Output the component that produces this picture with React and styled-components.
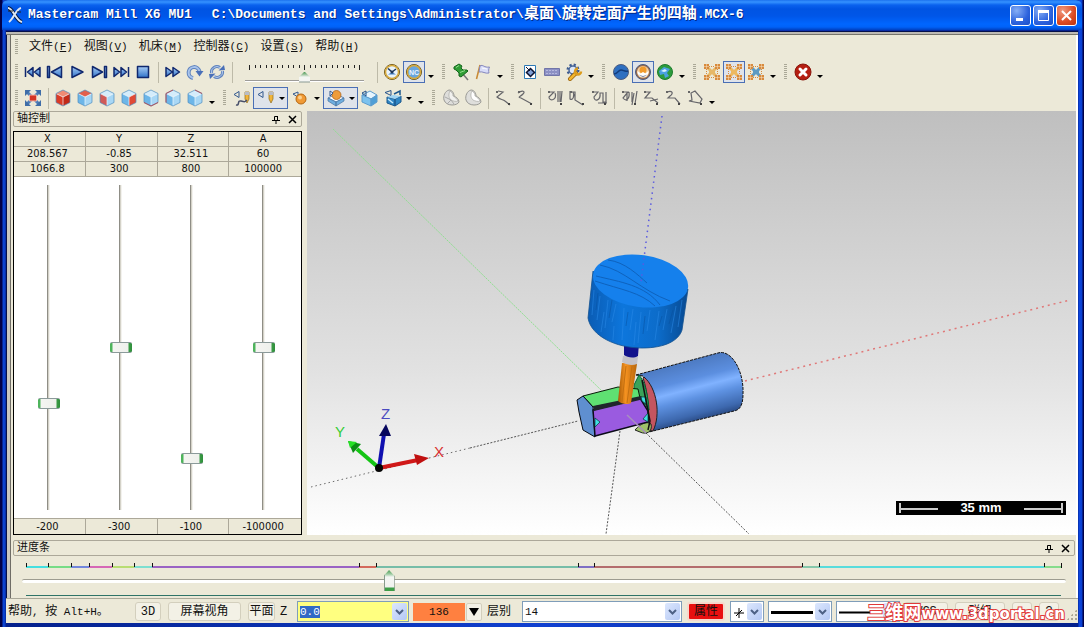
import { useEffect, useRef, useState } from 'react';
import styled, { createGlobalStyle, css } from 'styled-components';

const GlobalStyle = createGlobalStyle`
  * { box-sizing:border-box; }
  html, body { margin:0; }
  body { font-family:"Liberation Mono","Noto Sans CJK SC",monospace; font-size:12px; color:#111; }
  button, input, select { font:inherit; color:inherit; }
`;

/* ------------------- window frame ------------------- */
const Window = styled.div`
  display:flex;flex-direction:column;
  height:100vh;min-height:560px;position:relative;
  padding:0 6px 4px;
  background:linear-gradient(90deg,#000048 0,#000048 2px,#0b46d8 3px,#0b3fc8 5px,#04208c 6px,
    #1040d0 50%,#04208c calc(100% - 6px),#0b46e0 calc(100% - 5px),#0a3fd0 calc(100% - 2px),#000048 calc(100% - 1px));
`;
const TitleBar = styled.header`
  display:flex;align-items:center;height:30px;flex:none;
  margin:0 -4px;padding:0 5px 0 4px;
  border-radius:6px 6px 0 0;
  color:#fff;font-size:13px;font-weight:700;white-space:pre;
  text-shadow:1px 1px 0 #012a8a;
  background:linear-gradient(#1c72ee 0,#3592ff 2px,#0a62ee 5px,#0054e3 9px,#0056e8 16px,#0066ff 24px,#0062f8 27px,#0040c0 30px);
`;
const AppName = styled.h1`
  margin:0 20px 0 4px;font-size:13px;line-height:20px;
`;
const FilePath = styled.span`
  flex:1;line-height:20px;overflow:hidden;
`;
const Cjk = styled.span`
  font-size:15px;
`;
const WindowButtons = styled.div`
  display:flex;gap:2px;
`;
const WindowButton = styled.button`
  display:grid;place-items:center;width:21px;height:21px;padding:0;
  border:1px solid #fff;border-radius:3px;
  background:${p => p.$close
    ? 'radial-gradient(circle at 30% 25%,#f09a80,#dc4a22 60%,#b93412)'
    : 'radial-gradient(circle at 30% 25%,#86aef5,#2c62dd 60%,#1b4fc8)'};
`;
const Client = styled.main`
  flex:1;min-height:0;display:flex;flex-direction:column;
  margin-top:1px;padding:4px 2px 0 6px;
  background:
    linear-gradient(#05104a 0,#05104a 1px,#bdbab4 1px,#bdbab4 3px,#77756c 3px,#77756c 4px) 0 0/100% 4px no-repeat,
    linear-gradient(90deg,#05104a 0,#05104a 1px,#c9c7c0 1px,#c9c7c0 4px,#6f6d66 4px,#6f6d66 5px,#ece9d8 5px) 0 0/6px 100% no-repeat,
    linear-gradient(#fff,#fff) 100% 0/2px 100% no-repeat,
    #ece9d8;
`;

/* ------------------- menu and toolbars ------------------- */
const MenuBar = styled.nav`
  display:flex;align-items:center;height:24px;flex:none;
`;
const MenuItem = styled.button`
  margin:0 4px 0 7px;padding:0;border:0;background:none;line-height:18px;white-space:nowrap;
`;
const Mnemonic = styled.span`
  font-size:11px;
`;
const ToolRow = styled.div`
  display:flex;align-items:center;height:26px;flex:none;
`;
const Grip = styled.span`
  flex:none;height:16px;width:${p => p.$first ? 10 : 13}px;
  background:repeating-linear-gradient(#aaa897 0,#aaa897 1px,transparent 1px,transparent 2px)
    ${p => p.$first ? 3 : 5}px 0/3px 100% no-repeat;
`;
const Divider = styled.span`
  flex:none;width:8px;height:21px;
  background:linear-gradient(#bdbaa8,#bdbaa8) 4px 0/1px 100% no-repeat;
`;
const ToolButton = styled.button`
  display:flex;align-items:center;justify-content:center;flex:none;
  width:${p => p.$split ? 35 : 22}px;height:22px;padding:0;gap:4px;
  border:1px solid transparent;background:none;
  ${p => p.$active && css`border-color:#4a6fb5;background:#dfe3ea;`}
`;
const MoreButton = styled.button`
  display:flex;align-items:flex-end;justify-content:center;flex:none;
  width:12px;height:22px;padding:0 0 5px;border:0;background:none;
`;
const Triangle = styled.span`
  width:0;height:0;border:3px solid transparent;border-top-color:#000;border-bottom:0;
`;
const SpeedBox = styled.div`
  display:flex;flex-direction:column;width:137px;flex:none;height:22px;padding:4px 9px 0;
`;
const SpeedTicks = styled.div`
  display:flex;justify-content:space-between;align-items:flex-start;
  height:6px;flex:none;padding:0 4px;
`;
const Tick = styled.i`
  width:1px;height:${p => p.$tall ? 5 : 3}px;background:#222;
`;
const SpeedRange = styled.input`
  appearance:none;width:100%;height:11px;margin:0;background:none;
  &::-webkit-slider-runnable-track{ height:2px;margin-top:8px;background:#fff;border-top:1px solid #9d9c99; }
  &::-webkit-slider-thumb{
    appearance:none;width:11px;height:11px;margin-top:-9px;
    clip-path:polygon(50% 0,100% 50%,100% 100%,0 100%,0 50%);
    background:linear-gradient(#4a9c55 0,#8dbb8f 2px,#f4f5f2 5px,#f4f5f2 9px,#8a9a94 10px);
  }
`;

/* ------------------- dock panels ------------------- */
const Workspace = styled.div`
  flex:1;min-height:0;display:flex;
`;
const AxisPanel = styled.aside`
  display:flex;flex-direction:column;width:295px;flex:none;padding:0 5px 0 1px;
`;
const DockTitle = styled.div`
  display:flex;align-items:center;height:16px;flex:none;
  padding:0 1px 0 3px;border:1px solid #aca899;border-radius:2px;
`;
const DockName = styled.h2`
  flex:1;margin:0;font-size:11px;font-weight:400;line-height:14px;
`;
const DockButton = styled.button`
  display:grid;place-items:center;width:16px;height:14px;padding:0;border:0;background:none;
`;
const AxisBox = styled.div`
  flex:1;min-height:0;display:flex;flex-direction:column;margin-top:4px;
  border:1px solid #000;background:#fff;
  font-family:"DejaVu Sans Condensed","DejaVu Sans",sans-serif;font-size:11px;
`;
const AxisTable = styled.table`
  width:100%;table-layout:fixed;border-collapse:separate;border-spacing:0;flex:none;
  background:#ece9d8;
  th, td{
    height:15px;padding:0 4px 0 0;font-weight:400;line-height:14px;text-align:center;
    border-right:1px solid #aca899;border-bottom:1px solid #aca899;
  }
  th:last-child, td:last-child{ border-right:0; }
`;
const MinTable = styled(AxisTable)`
  border-top:1px solid #aca899;
  th, td{ border-bottom:0;line-height:15px; }
`;
const SliderRow = styled.div`
  flex:1;min-height:0;display:grid;grid-template-columns:repeat(4,1fr);
  padding:8px 0;
`;
const AxisSlot = styled.label`
  display:flex;justify-content:center;min-height:0;padding-right:3px;
`;
const AxisRange = styled.input`
  appearance:none;writing-mode:vertical-lr;direction:rtl;
  width:22px;height:100%;margin:0;background:none;
  &::-webkit-slider-runnable-track{
    width:3px;margin:0 auto;background:linear-gradient(90deg,#8f8e86 1px,#d4d2c8 1px,#d4d2c8 2px,#f3f2ee 2px);
  }
  &::-webkit-slider-thumb{
    appearance:none;width:22px;height:11px;margin-left:-9px;border-radius:2px;
    border:solid #8b9a9a;border-width:1px 0;
    background:linear-gradient(90deg,#4eb45c 0,#4eb45c 2px,#f5f5f2 3px,#eef0ec 18px,#3a9a45 19px,#2f8f3c 22px);
  }
`;

/* ------------------- 3D viewport ------------------- */
const Viewport = styled.section`
  flex:1;min-width:0;position:relative;overflow:hidden;
  background:linear-gradient(#bfbfbf,#e2e2e2 62%,#fff);
`;
const SceneSvg = styled.svg`
  display:block;width:100%;height:100%;
`;
const ScaleBar = styled.div`
  position:absolute;right:10px;bottom:20px;
  display:flex;align-items:center;justify-content:space-between;
  width:170px;height:14px;padding:0 3px;background:#000;color:#fff;
  font:700 13px/14px "Liberation Sans",sans-serif;
`;
const Whisker = styled.i`
  width:39px;height:10px;
  border-left:${p => p.$end ? 0 : 2}px solid #ccc;
  border-right:${p => p.$end ? 2 : 0}px solid #ccc;
  background:linear-gradient(#ccc,#ccc) 0 5px/100% 2px no-repeat;
`;

/* ------------------- progress panel ------------------- */
const ProgressPanel = styled.section`
  flex:none;padding:5px 1px 2px;
`;
const Segments = styled.div`
  display:flex;height:5px;margin:7px 13px 0;border-right:1px solid #111;
`;
const Segment = styled.i`
  flex:${p => p.$weight} 1 0;
  background:
    linear-gradient(#111,#111) 0 0/1px 4px no-repeat,
    linear-gradient(${p => p.$color},${p => p.$color}) 0 3px/100% 2px no-repeat;
`;
const ProgressRange = styled.input`
  appearance:none;display:block;width:calc(100% - 18px);height:22px;margin:2px 9px 0;background:none;
  &::-webkit-slider-runnable-track{ height:4px;background:#fff;border-top:1px solid #9d9c90;border-radius:2px; }
  &::-webkit-slider-thumb{
    appearance:none;width:11px;height:21px;margin-top:-10px;
    clip-path:polygon(50% 0,100% 28%,100% 100%,0 100%,0 28%);
    background:
      linear-gradient(90deg,#879a8c 0,#879a8c 1px,transparent 1px,transparent 10px,#6d8072 10px),
      linear-gradient(#4a9c55 0,#9ccaa0 4px,#f5f6f3 7px,#f0f1ee 17px,#3d9e47 18px);
  }
`;
const TotalLine = styled.div`
  height:1px;margin:3px 14px 0 13px;background:#2f7468;
`;

/* ------------------- status bar ------------------- */
const StatusBar = styled.footer`
  display:flex;align-items:center;height:25px;flex:none;
  padding:1px 1px 0 2px;border-top:1px solid #aaa899;background:#ece9d8;
  white-space:nowrap;overflow:hidden;
`;
const HelpText = styled.span`
  width:127px;flex:none;line-height:18px;
`;
const Small = styled.span`
  font-size:11px;
`;
const StatusButton = styled.button`
  width:${p => p.$width}px;height:19px;flex:none;margin-right:${p => p.$gap || 7}px;
  padding:0;border:1px solid #d3cfbd;border-radius:3px;background:#f3f1e6;line-height:16px;
`;
const StatusLabel = styled.label`
  width:${p => p.$width}px;flex:none;line-height:18px;
`;
const Combo = styled.div`
  position:relative;display:flex;height:21px;margin-right:4px;
  width:${p => p.$width}px;flex:none;
  border:1px solid #7f9db9;background:${p => p.$color || '#fff'};
`;
const ComboInput = styled.input`
  flex:1;min-width:0;padding:0 2px;border:0;outline:0;background:none;
  font-size:11px;
  &::selection{ background:#316ac5;color:#fff; }
`;
const ComboSelect = styled.select`
  appearance:none;width:100%;padding:0 2px;border:0;background:none;font-size:11px;
`;
const ComboArrow = styled.span`
  display:grid;place-items:center;width:15px;height:17px;margin:1px;flex:none;
  border-radius:2px;background:linear-gradient(135deg,#dce7fd,#b4c8f4);
  ${p => p.$over && css`position:absolute;right:0;top:0;pointer-events:none;`}
`;
const Sample = styled.svg`
  position:absolute;left:2px;top:2px;pointer-events:none;
`;
const ColorButton = styled.button`
  width:52px;height:18px;flex:none;padding:0;border:0;background:#ff8040;font-size:11px;line-height:16px;
`;
const ColorDrop = styled.button`
  display:grid;place-items:center;width:16px;height:18px;flex:none;margin:0 5px 0 1px;padding:0;
  border:1px solid #d3cfbd;border-radius:2px;background:#f3f1e6;
`;
const BigTriangle = styled.span`
  border:5px solid transparent;border-top:8px solid #000;border-bottom:0;
`;
const AttrButton = styled.button`
  width:38px;height:19px;flex:none;margin:0 5px 0 1px;padding:0;
  border:2px solid #f6d8cc;border-radius:3px;background:#e81010;line-height:14px;
`;
const SizeGrip = styled.span`
  align-self:flex-end;width:12px;height:12px;margin:0 0 2px auto;
  background:radial-gradient(circle,#a9a693 1px,transparent 1px) 0 0/4px 4px;
  clip-path:polygon(100% 0,100% 100%,0 100%);
`;
const Watermark = styled.div`
  position:absolute;right:19px;bottom:2px;pointer-events:none;
  color:#fff;-webkit-text-stroke:2px #e03a3a;paint-order:stroke fill;
  font:700 15px/22px "DejaVu Sans","Noto Sans CJK SC",sans-serif;white-space:nowrap;
`;
const WatermarkName = styled.span`
  font-size:18px;
`;

/* ------------------- icons ------------------- */
const Svg = ({ children, size = 18 }) => (
  <svg width={size} height={size} viewBox="0 0 18 18" fill="none" aria-hidden="true">{children}</svg>
);

const media = {
  first: 'M1.5 4v10M9 4.500L3.500 9l5.500 4.500zM16 4.500L10.500 9l5.500 4.500z',
  prev: 'M1.500 3.500h2v11h-2zM15.500 3.500v11L5.500 9z',
  play: 'M4 3.500v11L15 9z',
  next: 'M2.500 3.500v11L12.500 9zM14.500 3.500h2v11h-2z',
  last: 'M16.500 4v10M2 4.500L7.500 9 2 13.500zM9 4.500L14.500 9 9 13.500z',
  stop: 'M3.500 3.500h11v11h-11z',
  fast: 'M2 4.500L8.500 9 2 13.500zM9 4.500L15.500 9 9 13.500z',
};
const MediaIcon = ({ name }) => (
  <Svg><path d={media[name]} fill="url(#blueFill)" stroke="#10286e" strokeWidth="1.500" strokeLinejoin="round" /></Svg>
);
const TurnIcon = () => (
  <Svg>
    <path d="M7 15A5.500 5.500 0 1 1 13.500 8.500" stroke="#5f83bd" strokeWidth="4" />
    <path d="M7 15A5.500 5.500 0 1 1 13.500 8.500" stroke="#a9c4ec" strokeWidth="2" />
    <path d="M9.500 8h8L13.500 13.500z" fill="#4a70b8" />
  </Svg>
);
const CycleIcon = () => (
  <Svg>
    <path d="M3.500 10A5.500 5.500 0 0 1 12 4.500M14.500 8A5.500 5.500 0 0 1 6 13.500" stroke="#5f83bd" strokeWidth="3" />
    <path d="M3.500 10A5.500 5.500 0 0 1 12 4.500M14.500 8A5.500 5.500 0 0 1 6 13.500" stroke="#b4cbee" />
    <path d="M10.500 7.500l6.500-.5-1-5zM7.500 10.500L1 11l1 5z" fill="#4a70b8" />
  </Svg>
);
const ClockIcon = ({ nc }) => (
  <Svg>
    <circle cx="9" cy="9" r="7.500" fill={nc ? '#68a5dd' : '#e9f3fb'} stroke="#6a5214" />
    <circle cx="9" cy="9" r="6.500" stroke="#d6a93c" strokeWidth="1.500" />
    {nc
      ? <text x="9" y="11.500" textAnchor="middle" fontSize="7" fontWeight="700" fill="#e8f4ff" fontFamily="Liberation Sans">NC</text>
      : <><path d="M9 9L5 5.500M9 9l4-3" stroke="#1d3557" strokeWidth="1.500" /><path d="M5 11.500h8L9 9z" fill="#4b86c6" /><circle cx="9" cy="9" r="1.500" fill="#1d3557" /></>}
  </Svg>
);
const PinIcon = () => (
  <Svg>
    <path d="M10 10l6 7" stroke="#777" strokeWidth="1.500" />
    <path d="M2 4l5-3 3 2-1 2 2 2h4l1 1-7 6-2-1v-3L4 7 2 6z" fill="#2f9d35" stroke="#14651c" />
    <path d="M4 4.500l3-2M8 9.500l5-2" stroke="#92dd8b" />
  </Svg>
);
const FlagIcon = () => (
  <Svg>
    <path d="M6 2L2.500 16" stroke="#c98a35" strokeWidth="1.500" />
    <path d="M6 3c3-2 4 2 9.500 1-1 2-1 4-.5 6-4 1-6-2-10-1z" fill="#d8dcf8" stroke="#8487bd" />
    <path d="M8 5c2 0 3 1 5 1" stroke="#fff" />
  </Svg>
);
const MatchIcon = () => (
  <Svg>
    <path d="M3.500 2.500h11v13h-11z" fill="#fff" stroke="#2d79b5" />
    <path d="M9.500 5.500l4 4-4 4-4-4z" fill="#7fa0d6" stroke="#0c1230" strokeWidth="1.500" />
    <path d="M5 4l4 4" stroke="#0c1230" />
  </Svg>
);
const RulerIcon = () => (
  <Svg><path d="M1.500 5.500h15v7h-15z" fill="#8c90c4" stroke="#7175a8" /><path d="M3 7.500h12M3 10.500h12" stroke="#b5b8de" strokeDasharray="2 1" /></Svg>
);
const GearIcon = () => (
  <Svg>
    <circle cx="8" cy="7" r="5" stroke="#3d5b8f" strokeWidth="3" strokeDasharray="2 1.930" />
    <circle cx="8" cy="7" r="4" fill="#dfe8f5" stroke="#4a689b" strokeWidth="1.500" />
    <path d="M5 16l6-6" stroke="#9a6510" strokeWidth="4" strokeLinecap="round" />
    <path d="M5 16l6-6" stroke="#f2b62e" strokeWidth="2.500" strokeLinecap="round" />
    <path d="M16 8.500a3 3 0 1 1-3-3" stroke="#dc9c1c" strokeWidth="2.500" />
  </Svg>
);
const GlobeIcon = ({ kind }) => {
  const tint = { blue: '#2e6fc0', warm: '#9d6b4a', green: '#2c9b3c' }[kind];
  return (
    <Svg>
      <circle cx="9" cy="9" r="7.500" fill={tint} stroke={kind === 'green' ? '#1d7c2d' : '#4b5c80'} />
      {kind === 'blue' && <path d="M2 11c4 0 4-4 7-4s3 2 7 1" stroke="#123c7c" strokeWidth="1.500" />}
      {kind === 'warm' && (
        <>
          <circle cx="9" cy="9" r="6" fill="#f3d3a8" />
          <circle cx="9" cy="7" r="3.500" fill="#f09a2c" />
          <path d="M3.500 8l3 2.500L9 9l2.500 1.500L14.500 8c0 4-2.500 6-5.500 6s-5.500-2-5.500-6z" fill="#fff" />
          <path d="M4.500 11.500L9 13l4.500-1.500-4.500 3z" fill="#8b8fa5" />
        </>
      )}
      {kind === 'green' && <><path d="M3 8l5-4 6 2-3 4 2 3-4 2-1-4-4 1z" fill="#4aa0e0" /><path d="M5 8l4-2 2 2-3 1z" fill="#d9f3ff" /></>}
    </Svg>
  );
};
const FixtureIcon = ({ mid, accent = '#d78a3c' }) => (
  <Svg>
    <path d="M4 4l10 10M14 4L4 14" stroke={mid} strokeWidth="3" />
    {[[1, 1], [12, 1], [1, 12], [12, 12]].map(([x, y]) => (
      <g key={`${x}-${y}`}>
        <path d={`M${x} ${y}h5v5h-5z`} fill={accent} />
        <path d={`M${x} ${y + 2.500}h5M${x + 2.500} ${y}v5`} stroke="#f6e4c8" strokeWidth=".5" />
      </g>
    ))}
    <path d="M6 7h6v4H6z" fill={mid} />
    <path d="M3.500 6v6M14.500 6v6M6 3.500h6M6 14.500h6" stroke={accent} strokeDasharray="1 1" />
  </Svg>
);
const FitIcon = () => (
  <Svg>
    <path d="M3 3l12 12M15 3L3 15" stroke="#4d7db8" strokeWidth="3" />
    <path d="M1 1h6L1 7zM17 1h-6l6 6zM1 17h6l-6-6zM17 17h-6l6-6z" fill="#3f6da8" />
    <path d="M5.500 6h7v6h-7z" fill="#d53525" stroke="#f3b5a5" />
  </Svg>
);
const StopIcon = () => (
  <Svg>
    <circle cx="9" cy="9" r="8" fill="#b51f12" stroke="#8a150b" />
    <path d="M6 6l6 6M12 6l-6 6" stroke="#fff" strokeWidth="3" strokeLinecap="round" />
  </Svg>
);
const CubeIcon = ({ top = '#d4ecfb', left = '#6db6e8', right = '#a8d7f5', line }) => (
  <Svg>
    <path d="M9 1l7 3.500L9 8 2 4.500z" fill={top} />
    <path d="M2 4.500L9 8v9l-7-3.500z" fill={left} />
    <path d="M16 4.500L9 8v9l7-3.500z" fill={right} />
    <path d="M2 4.500L9 8l7-3.500M9 8v9" stroke="#f2f9fe" strokeWidth=".7" />
    <path d="M9 1l7 3.500v9L9 17l-7-3.500v-9z" stroke="#4d8cbf" strokeWidth=".7" />
    {line && <path d={line} stroke="#b0505a" />}
  </Svg>
);
const ToolTipIcon = ({ trace }) => (
  <Svg>
    <path d="M1 5.500l5-3v6z" stroke="#33598f" />
    <path d="M12 3h4v7l-2 4-2-4z" fill="#f2b53a" stroke="#8d6a1d" strokeWidth=".7" />
    <path d="M12 3h4v3h-4z" fill="#b8bcc7" />
    {trace && <path d="M3 16c4 1 1-5 5-4s4 1 6-1" stroke="#48506a" strokeWidth="1.500" />}
  </Svg>
);
const StockIcon = () => (
  <Svg>
    <path d="M1 5l5-2v5z" stroke="#33598f" />
    <circle cx="9" cy="10" r="5" fill="#f09a35" stroke="#b5660f" /><circle cx="8" cy="8.500" r="2" fill="#fbd08d" />
  </Svg>
);
const SolidIcon = () => (
  <Svg>
    <path d="M1 9l8-4 8 4-8 4z" fill="#f7fbff" stroke="#5b84b5" />
    <path d="M1 9v3l8 5v-4zM17 9v3l-8 5v-4z" fill="#6faee0" stroke="#47749f" strokeWidth=".7" />
    <circle cx="9.500" cy="6" r="4.500" fill="#ee9c3b" stroke="#a65b12" strokeWidth=".7" />
    <path d="M6 4l-3-2v5z" fill="#e9eef9" stroke="#33598f" />
  </Svg>
);
const BoxIcon = () => (
  <Svg>
    <path d="M2 6l8-4 7 4-6 4z" fill="#e6f5fe" stroke="#5d9ccd" />
    <path d="M2 6l9 4v7l-9-4z" fill="#7cc2ee" stroke="#5d9ccd" />
    <path d="M17 6l-6 4v7l6-4z" fill="#4f9fd6" stroke="#5d9ccd" />
    <path d="M2 4l4-2v5z" stroke="#24528b" />
  </Svg>
);
const MachineIcon = () => (
  <Svg>
    <path d="M1 3.500l6-2v5z" stroke="#24528b" />
    <path d="M3 8l8 2v7l-8-3zM17 7l-6 3v7l6-4z" fill="#2f86c4" stroke="#1d588d" />
    <path d="M3 8l6-2 8 1-6 3z" fill="#9ed4f3" /><path d="M10 5l6-3v4" stroke="#1d588d" strokeWidth="1.500" />
    <path d="M4 10l5 4" stroke="#c9eafc" strokeWidth="1.500" />
  </Svg>
);
/* shell shape: a tilted disc with a lighter lobe at the lower right */
const PartIcon = ({ plain }) => (
  <Svg>
    <path d="M7 1C3 2 1 7 2 11c1 3 4 5 8 5 3 0 6-1 7-3 0-3-3-5-5-6 0-3-2-6-5-6z" fill="#dededb" stroke="#9a9a95" />
    <path d="M8 2c-2 4-1 7 1 9 2 1 5 2 7 1-1-2-3-4-5-5 0-2-1-4-3-5z" fill={plain ? '#fff' : '#f1f1ef'} stroke="#a9a9a4" strokeWidth=".7" />
    {!plain && <path d="M3 8l6 3-4 4M9 11l3 4" stroke="#aaa" />}
  </Svg>
);
const curves = [
  'M4 2l5 1-6 5c3 3 6 2 8 4l5 4',
  'M2 4c4-3 8-2 5 1s-6 3-2 4l11 6',
  'M2 3h6L3 8c0 5 9 3 6-4M12 2v11M14 2v11M16 2l-1 11',
  'M2 2v8c3 2 5-4 3-7M4 3h3v8l8 5',
  'M2 3h6L4 8c0 5 7 4 6-4h3v9h3V3M8 14h9',
  'M2 3h6L3 9c3 4 7 1 6-6M4 3h3v9M12 3v10M14 4l-2 12M17 2l-2 13',
  'M2 3h6L3 9h7l6 5M8 12l8-2',
  'M3 3c5-2 7 1 3 4l-2 2h7l5 6',
  'M3 12l3-1-1-7 4-2 7 8-2 4z',
];
const CurveIcon = ({ index }) => (
  <Svg>
    <path d={curves[index]} stroke="#66666a" strokeWidth="1.200" />
    <path d="M14 14h2v2h-2z" fill="#444" /><path d="M2 2h2v2H2z" fill="#666" />
  </Svg>
);
const ChevronIcon = () => (
  <svg width="9" height="6" viewBox="0 0 9 6" fill="none" aria-hidden="true">
    <path d="M1 1l3.500 3.500L8 1" stroke="#4d6185" strokeWidth="2" />
  </svg>
);
const AppIcon = () => (
  <Svg size={18}>
    <path d="M2 2c5 0 8 13 14 14" stroke="#061a44" strokeWidth="4" />
    <path d="M2 2c5 0 8 13 14 14M15 2C10 3 8 12 3 16" stroke="#dfe7f2" strokeWidth="2" />
    <path d="M2 5h5M11 6h4" stroke="#222" />
  </Svg>
);

/* ------------------- data ------------------- */
const menus = [['文件', 'F'], ['视图', 'V'], ['机床', 'M'], ['控制器', 'C'], ['设置', 'S'], ['帮助', 'H']];

const axes = [
  { name: 'X', value: 208.567, max: 1066.8, min: -200 },
  { name: 'Y', value: -0.85, max: 300, min: -300 },
  { name: 'Z', value: 32.511, max: 800, min: -100 },
  { name: 'A', value: 60, max: 100000, min: -100000 },
];

const segments = [
  [22, '#45dfe0'], [23, '#77dc86'], [18, '#7387dd'], [23, '#d668b6'], [22, '#b8dd72'],
  [18, '#7ddfd0'], [207, '#9a63c4'], [17, '#d46a5c'], [203, '#76bda8'], [16, '#7f6fc4'],
  [208, '#b46d6d'], [17, '#86c7ab'], [225, '#58dcdc'], [17, '#86dc8c'],
];

const red = '#dc3b26';
const cubes = [
  { top: '#f08a74', left: red, right: '#c22a18' },
  { top: '#e2604c' },
  { left: '#cf5a58' },
  { right: '#e04a36' },
  { line: 'M2 13.500L9 17l7-3.500' },
  { line: 'M2 13.500v-9L9 1' },
  { line: 'M9 1l7 3.500' },
];
const cubeNames = ['等角视图', '俯视图', '前视图', '右视图', '仰视图', '后视图', '左视图'];

/* ------------------- parts ------------------- */
const Tool = ({ label, active, split, children }) => (
  <ToolButton type="button" aria-label={label} $active={active} $split={split}>
    {children}
    {split && <Triangle />}
  </ToolButton>
);
const More = () => <MoreButton type="button" aria-label="更多"><Triangle /></MoreButton>;

function PlaybackToolbar() {
  return (
    <ToolRow role="toolbar" aria-label="播放">
      <Grip $first />
      {['first', 'prev', 'play', 'next', 'last', 'stop'].map(n => (
        <Tool key={n} label={n}><MediaIcon name={n} /></Tool>
      ))}
      <Divider />
      <Tool label="fast"><MediaIcon name="fast" /></Tool>
      <Tool label="turn"><TurnIcon /></Tool>
      <Tool label="cycle"><CycleIcon /></Tool>
      <Divider />
      <SpeedBox>
        <SpeedTicks>
          {Array.from({ length: 21 }, (_, i) => <Tick key={i} $tall={i % 10 === 0} />)}
        </SpeedTicks>
        <SpeedRange type="range" aria-label="速度" defaultValue={50} />
      </SpeedBox>
      <Divider />
      <Tool label="时间"><ClockIcon /></Tool>
      <Tool label="NC" active><ClockIcon nc /></Tool>
      <More />
      <Grip />
      <Tool label="固定"><PinIcon /></Tool>
      <Tool label="标记"><FlagIcon /></Tool>
      <More />
      <Grip />
      <Tool label="比较"><MatchIcon /></Tool>
      <Tool label="测量"><RulerIcon /></Tool>
      <Tool label="选项"><GearIcon /></Tool>
      <More />
      <Grip />
      <Tool label="刀路"><GlobeIcon kind="blue" /></Tool>
      <Tool label="工件" active><GlobeIcon kind="warm" /></Tool>
      <Tool label="机床"><GlobeIcon kind="green" /></Tool>
      <More />
      <Grip />
      <Tool label="夹具"><FixtureIcon mid="#e6b868" /></Tool>
      <Tool label="夹具工件" active><FixtureIcon mid="#edb95f" /></Tool>
      <Tool label="夹具机床"><FixtureIcon mid="#5c9bc4" /></Tool>
      <More />
      <Grip />
      <Tool label="退出"><StopIcon /></Tool>
      <More />
    </ToolRow>
  );
}

function ViewToolbar() {
  return (
    <ToolRow role="toolbar" aria-label="视图">
      <Grip $first />
      <Tool label="适度化"><FitIcon /></Tool>
      <Divider />
      {cubes.map((c, i) => <Tool key={cubeNames[i]} label={cubeNames[i]}><CubeIcon {...c} /></Tool>)}
      <More />
      <Grip />
      <Tool label="刀具轨迹"><ToolTipIcon trace /></Tool>
      <Tool label="刀具" active split><ToolTipIcon /></Tool>
      <Tool label="毛坯" split><StockIcon /></Tool>
      <Tool label="实体" active split><SolidIcon /></Tool>
      <Tool label="外框"><BoxIcon /></Tool>
      <Tool label="机台" split><MachineIcon /></Tool>
      <More />
      <Grip />
      <Tool label="零件网格"><PartIcon /></Tool>
      <Tool label="零件"><PartIcon plain /></Tool>
      {curves.map((_, i) => [
        (i === 0 || i === 2 || i === 5) && <Divider key={`d${i}`} />,
        <Tool key={i} label={`曲线 ${i + 1}`}><CurveIcon index={i} /></Tool>,
      ])}
      <More />
    </ToolRow>
  );
}

function DockHeader({ title }) {
  return (
    <DockTitle>
      <DockName>{title}</DockName>
      <DockButton type="button" aria-label="固定">
        <svg width="8" height="9" viewBox="0 0 8 9" fill="none">
          <path d="M2.500 5V1.500h3V5M0 5.500h8M4 6v3" stroke="#000" /><path d="M5 1h1v4H5z" fill="#000" />
        </svg>
      </DockButton>
      <DockButton type="button" aria-label="关闭">
        <svg width="9" height="9" viewBox="0 0 9 9"><path d="M1 1l7 7M8 1L1 8" stroke="#000" strokeWidth="1.500" /></svg>
      </DockButton>
    </DockTitle>
  );
}

function AxisControl() {
  const [values, setValues] = useState(axes.map(a => a.value));
  const move = (i, v) => setValues(values.map((old, k) => (k === i ? Number(v) : old)));

  return (
    <AxisPanel>
      <DockHeader title="轴控制" />
      <AxisBox>
        <AxisTable>
          <thead><tr>{axes.map(a => <th key={a.name} scope="col">{a.name}</th>)}</tr></thead>
          <tbody>
            <tr>{axes.map((a, i) => <td key={a.name}>{values[i]}</td>)}</tr>
            <tr>{axes.map(a => <td key={a.name}>{a.max}</td>)}</tr>
          </tbody>
        </AxisTable>
        <SliderRow>
          {axes.map((a, i) => (
            <AxisSlot key={a.name}>
              <AxisRange type="range" step="any" aria-label={a.name} min={a.min} max={a.max}
                         value={values[i]} onChange={e => move(i, e.target.value)} />
            </AxisSlot>
          ))}
        </SliderRow>
        <MinTable>
          <tbody><tr>{axes.map(a => <td key={a.name}>{a.min}</td>)}</tr></tbody>
        </MinTable>
      </AxisBox>
    </AxisPanel>
  );
}

function Scene() {
  return (
    <SceneSvg viewBox="307 111 769 424" preserveAspectRatio="xMidYMid slice" fill="none" role="img" aria-label="机床仿真">
      <defs>
        <linearGradient id="blueFill" x1="0" y1="0" x2="0" y2="1">
          <stop offset="0" stopColor="#a9cdf5" /><stop offset="1" stopColor="#2f72c8" />
        </linearGradient>
        <linearGradient id="bar" gradientUnits="userSpaceOnUse" x1="680" y1="362" x2="696" y2="424">
          <stop offset="0" stopColor="#4c79c0" /><stop offset=".3" stopColor="#5c8fe0" />
          <stop offset=".45" stopColor="#80b2ff" /><stop offset=".6" stopColor="#5e92e2" />
          <stop offset=".85" stopColor="#3d68ae" /><stop offset="1" stopColor="#223f74" />
        </linearGradient>
        <linearGradient id="holder" x1="0" y1="0" x2="1" y2="0">
          <stop offset="0" stopColor="#0a5cb4" /><stop offset=".35" stopColor="#0d76dc" />
          <stop offset=".7" stopColor="#0c6cca" /><stop offset="1" stopColor="#084a92" />
        </linearGradient>
        <linearGradient id="cutter" x1="0" y1="0" x2="1" y2="0">
          <stop offset="0" stopColor="#a85a06" /><stop offset=".4" stopColor="#f59220" /><stop offset="1" stopColor="#b8660c" />
        </linearGradient>
      </defs>

      {/* long axis lines */}
      <path d="M333 129L602 391" stroke="#8fe08f" strokeDasharray="2 1" />
      <path d="M745 381L1070 300" stroke="#e07878" strokeWidth="1.500" strokeDasharray="2 4" />
      <path d="M311 487L470 448" stroke="#6b6b6b" strokeDasharray="1.500 3" />
      <path d="M470 448L578 421M620 431L606 534M646 433L749 534" stroke="#555" strokeDasharray="2 1.500" />

      {/* round stock */}
      <path d="M636 375L718 353C731 349 744 370 743 394C743 405 740 410 734 411L649 432C661 420 655 388 643 376z"
            fill="url(#bar)" stroke="#111" strokeDasharray="3 1" />
      <path d="M644 377C657 388 661 415 653 431L647 430C650 413 648 392 643 378z" fill="#c45560" stroke="#222" />
      <path d="M634 385L639 375C645 382 648 395 649 410L641 398L634 390z" fill="#3aa35a" stroke="#063" />
      <path d="M635 430C641 423 647 421 651 424C653 432 646 435 640 432z" fill="#9fc069" stroke="#222" />

      {/* milled block */}
      <path d="M583 396L618 387L638 389L640 398L593 407z" fill="#5fe072" stroke="#081a08" />
      <path d="M577 400L583 396L593 407L595 437L583 430L579 412z" fill="#5f8fd0" stroke="#05090f" />
      <path d="M593 410L640 398L648 411L648 422L595 436z" fill="#9a5be0" stroke="#0b0b18" strokeWidth="1.500" />
      <path d="M593 406L641 396L644 399L594 411z" fill="#20262c" />
      <path d="M595 418L600 422L595 427zM641 397h5v7l-4-3zM648 413l-5 6 5 3z" fill="#3fe0e0" stroke="#06343a" strokeWidth=".7" />
      <path d="M627 415L646 433" stroke="#a78fbe" strokeWidth="1.500" />
      <path d="M642 380L650 421L648 430" stroke="#111" strokeWidth="1.500" />

      {/* tool and holder */}
      <path d="M622 363L637 364L631 403C628 405 621 404 618 401z" fill="url(#cutter)" />
      <path d="M626 366L622 402M632 366L627 403" stroke="#c47011" />
      <path d="M623 356L638 357L637 364C632 366 627 365 622 362z" fill="#c4c2c8" />
      <path d="M624 343H639L638 356C633 359 627 357 624 355z" fill="#12128c" />
      <path d="M593 271L588 318C591 336 616 348 642 348C666 348 679 340 682 330L688 289z" fill="url(#holder)" />
      <path d="M594 290L592 315M600 296L597 320M608 300L605 328M616 304L612 322M624 308L622 340M633 309L630 330M641 312L638 343M650 310L647 331M659 311L655 340M667 309L663 330M676 306L671 333M682 300L678 327M604 312L601 332M636 322L634 345M614 326L613 340"
            stroke="#2b8bea" opacity=".5" />
      <path d="M598 293L596 310M612 300L609 318M628 312L626 326M645 316L643 334M662 316L659 326M673 310L669 324"
            stroke="#07509e" opacity=".5" />
      <ellipse cx="640.500" cy="281" rx="48" ry="26" transform="rotate(8 640.500 281)" fill="#1580ec" />
      <path d="M600 265C625 270 640 290 670 301M596 276C620 282 645 285 660 305M595 281C622 290 640 292 655 306M608 260C625 262 638 275 647 283"
            stroke="#0e62bd" />
      <path d="M593 271L588 318C591 336 616 348 642 348C666 348 679 340 682 330L688 289" stroke="#12508f" strokeWidth=".8" />
      <path d="M662 116L641 282" stroke="#5a5ae0" strokeWidth="1.500" strokeDasharray="1.500 4" />

      {/* axis triad */}
      <path d="M379 468L418 460" stroke="#d01818" strokeWidth="4" />
      <path d="M429 458L414 454L417 465z" fill="#c01010" />
      <path d="M379 468L357 449" stroke="#14c414" strokeWidth="4" />
      <path d="M348 441L361 444L353 453z" fill="#0b8f14" />
      <path d="M348 441L357 442L350 448z" fill="#25e025" />
      <path d="M379 468L384 434" stroke="#1010b0" strokeWidth="4" />
      <path d="M386 424L391 436L379 436z" fill="#07075e" />
      <circle cx="379" cy="468" r="4" fill="#050505" />
      <g fontFamily="Liberation Sans, sans-serif" fontSize="15">
        <text x="434" y="457" fill="#d83030">X</text>
        <text x="335" y="437" fill="#35cc35">Y</text>
        <text x="381" y="419" fill="#4a4ac0">Z</text>
      </g>
    </SceneSvg>
  );
}

function Progress() {
  return (
    <ProgressPanel>
      <DockHeader title="进度条" />
      <Segments>{segments.map(([w, c], i) => <Segment key={i} $weight={w} $color={c} />)}</Segments>
      <ProgressRange type="range" aria-label="进度" min={0} max={100} defaultValue={35} />
      <TotalLine />
    </ProgressPanel>
  );
}

function Status() {
  const depth = useRef(null);

  /* the depth field starts out ready to be overwritten */
  useEffect(() => {
    depth.current.focus();
    depth.current.select();
  }, []);

  return (
    <StatusBar>
      <HelpText>帮助<Small>, </Small>按<Small> Alt+H</Small>。</HelpText>
      <StatusButton type="button" $width={26}>3D</StatusButton>
      <StatusButton type="button" $width={73}>屏幕视角</StatusButton>
      <StatusButton type="button" $width={27} $gap={5}>平面</StatusButton>
      <StatusLabel htmlFor="depth" $width={17}>Z</StatusLabel>
      <Combo $width={112} $color="#ffff80">
        <ComboInput id="depth" ref={depth} defaultValue="0.0" />
        <ComboArrow><ChevronIcon /></ComboArrow>
      </Combo>
      <ColorButton type="button">136</ColorButton>
      <ColorDrop type="button" aria-label="颜色"><BigTriangle /></ColorDrop>
      <StatusLabel htmlFor="level" $width={35}>层别</StatusLabel>
      <Combo $width={160}>
        <ComboSelect id="level" defaultValue="14"><option>14</option></ComboSelect>
        <ComboArrow $over><ChevronIcon /></ComboArrow>
      </Combo>
      <AttrButton type="button">属性</AttrButton>
      <Combo $width={34}>
        <ComboSelect aria-label="点型" />
        <Sample width="12" height="16" viewBox="0 0 12 16"><path d="M1 9h10M6 4v10M3 12l6-6" stroke="#000" /></Sample>
        <ComboArrow $over><ChevronIcon /></ComboArrow>
      </Combo>
      <Combo $width={64}>
        <ComboSelect aria-label="线宽" />
        <Sample width="42" height="16" viewBox="0 0 42 16"><path d="M0 8.500h42" stroke="#000" strokeWidth="3" /></Sample>
        <ComboArrow $over><ChevronIcon /></ComboArrow>
      </Combo>
      <Combo $width={64}>
        <ComboSelect aria-label="线型" />
        <Sample width="42" height="16" viewBox="0 0 42 16"><path d="M0 8.500h42" stroke="#000" strokeWidth="2" /></Sample>
        <ComboArrow $over><ChevronIcon /></ComboArrow>
      </Combo>
      <StatusButton type="button" $width={44}>WCS</StatusButton>
      <StatusButton type="button" $width={50}>群组</StatusButton>
      <StatusButton type="button" $width={20} aria-label="遮罩" />
      <StatusButton type="button" $width={20}>?</StatusButton>
      <SizeGrip />
    </StatusBar>
  );
}

export default function App() {
  return (
    <Window>
      <GlobalStyle />
      <TitleBar>
        <AppIcon />
        <AppName>Mastercam Mill X6 MU1</AppName>
        <FilePath>
          C:\Documents and Settings\Administrator\<Cjk>桌面</Cjk>\<Cjk>旋转定面产生的四轴</Cjk>.MCX-6
        </FilePath>
        <WindowButtons>
          <WindowButton type="button" aria-label="最小化">
            <svg width="13" height="13"><path d="M2 9h7v3H2z" fill="#fff" /></svg>
          </WindowButton>
          <WindowButton type="button" aria-label="最大化">
            <svg width="13" height="13"><path d="M1.500 2v9.500h10V2M1 2.500h11" stroke="#fff" fill="none" /><path d="M1 1h11v3H1z" fill="#fff" /></svg>
          </WindowButton>
          <WindowButton type="button" aria-label="关闭" $close>
            <svg width="13" height="13"><path d="M2 2l9 9M11 2l-9 9" stroke="#fff" strokeWidth="2" /></svg>
          </WindowButton>
        </WindowButtons>
      </TitleBar>

      <Client>
        <MenuBar>
          <Grip $first />
          {menus.map(([name, key]) => (
            <MenuItem key={key} type="button">{name}<Mnemonic>(<u>{key}</u>)</Mnemonic></MenuItem>
          ))}
        </MenuBar>
        <PlaybackToolbar />
        <ViewToolbar />
        <Workspace>
          <AxisControl />
          <Viewport>
            <Scene />
            <ScaleBar><Whisker /><span>35 mm</span><Whisker $end /></ScaleBar>
          </Viewport>
        </Workspace>
        <Progress />
      </Client>

      <Status />
      <Watermark><WatermarkName>三维网</WatermarkName>www.3dportal.cn</Watermark>
    </Window>
  );
}
